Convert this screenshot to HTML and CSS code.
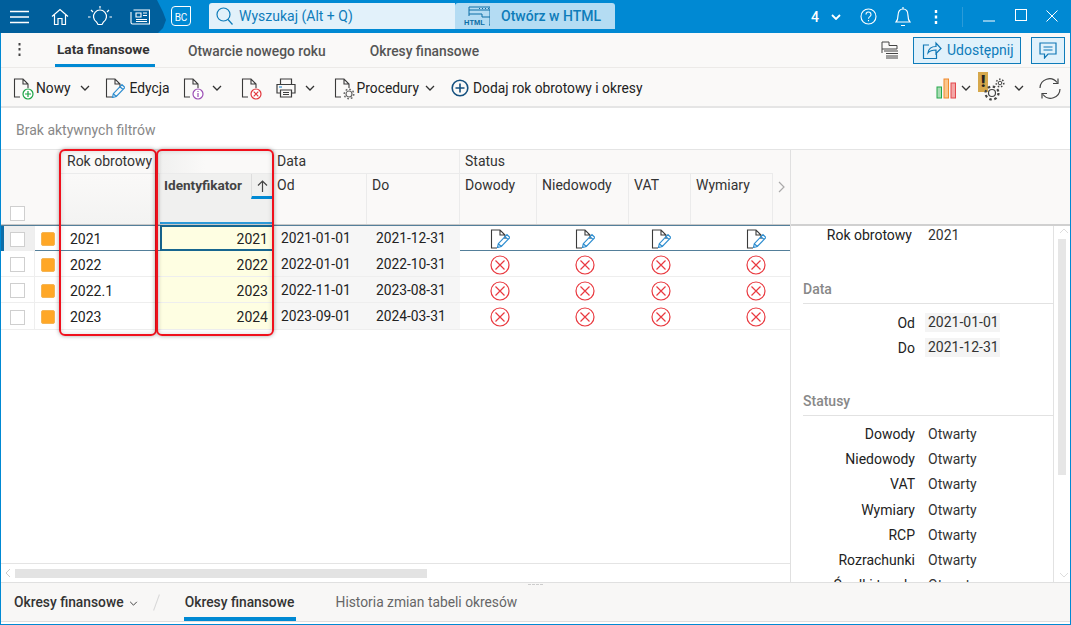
FILE: index.html
```html
<!DOCTYPE html>
<html lang="pl">
<head>
<meta charset="utf-8">
<title>Lata finansowe</title>
<link rel="stylesheet" href="styles.css">
</head>
<body>
<svg class="defs" width="0" height="0">
  <symbol id="doc" viewBox="0 0 20 20"><path d="M7 19H1.500V1H10l5 5v4M10 1v5h5" fill="none" stroke="#3a3a3a" stroke-width="1.100"/></symbol>
  <symbol id="pen" viewBox="0 0 20 20"><path d="M7.500 19.500l.8-3.800 8.700-9 3 2.800-8.700 9zM8.300 15.700l3 2.800M15 8.700l3 2.800" fill="none" stroke="#2f8ed0" stroke-width="1.200"/></symbol>
  <symbol id="xc" viewBox="0 0 20 20"><circle cx="10" cy="10" r="9" fill="none" stroke="#e9393f" stroke-width="1.200"/><path d="M5.500 5.500l9 9M14.500 5.500l-9 9" stroke="#e9393f" stroke-width="1.200"/></symbol>
  <symbol id="chev" viewBox="0 0 10 6"><path d="M1 1l4 4 4-4" fill="none" stroke="#333" stroke-width="1.300"/></symbol>
</svg>
<div class="app">
  <header class="titlebar">
    <div class="dark">
      <svg class="ic-menu" width="20" height="14" viewBox="0 0 20 14"><path d="M0 1.500h19M0 7h19M0 12.500h19" stroke="#fff" stroke-width="1.300"/></svg>
      <svg class="ic-home" width="18" height="18" viewBox="0 0 18 18"><path d="M1 8.500L9 1.500l8 7M3.500 7v9.500h3.500v-6h4v6h3.500V7" fill="none" stroke="#fff" stroke-width="1.200"/></svg>
      <svg class="ic-bulb" width="24" height="24" viewBox="0 0 24 24"><path d="M8.500 17a6.500 6.500 0 1 1 7 0l-1.500 2.500h-4zM12 1v2.500M3 5l2 2M21 5l-2 2M0 12h2.500M24 12h-2.500" fill="none" stroke="#fff" stroke-width="1.200"/></svg>
      <svg class="ic-news" width="20" height="16" viewBox="0 0 20 16"><path d="M3.500 1h16v14H2.500A1.500 1.500 0 0 1 1 13.500V3M6 4h5v4H6zM13 4h4M13 6.500h4M6 10.500h11M6 12.500h11" fill="none" stroke="#fff" stroke-width="1.100"/></svg>
    </div>
    <div class="bc">BC</div>
    <div class="search">
      <svg width="17" height="18" viewBox="0 0 17 18"><circle cx="7.500" cy="7.500" r="6.500" fill="none" stroke="#0e7cba" stroke-width="1.200"/><path d="M12 12.500l4.500 5" stroke="#0e7cba" stroke-width="1.200"/></svg>
      <span>Wyszukaj (Alt + Q)</span>
    </div>
    <div class="openhtml">
      <svg width="26" height="22" viewBox="0 0 26 22"><path d="M5 11V2h21v18h-1M5 5h21M5 9h13v3h8M15 3.500h1M18 3.500h1M21 3.500h1M24 3.500h1" fill="none" stroke="#0d6ea6" stroke-width="1"/><text x="0" y="20" class="htmltag">HTML</text></svg>
      <span>Otwórz w HTML</span>
    </div>
    <div class="winarea">
      <span class="num">4</span>
      <svg class="w-chev" width="10" height="6" viewBox="0 0 10 6"><path d="M1 1l4 4 4-4" fill="none" stroke="#fff" stroke-width="1.800"/></svg>
      <svg class="w-help" width="17" height="17" viewBox="0 0 17 17"><circle cx="8.500" cy="8.500" r="7.500" fill="none" stroke="#fff" stroke-width="1.100"/><path d="M6 6.500a2.500 2.500 0 1 1 3.800 2.100C8.900 9.200 8.500 9.700 8.500 10.800M8.500 12v1.300" fill="none" stroke="#fff" stroke-width="1.100"/></svg>
      <svg class="w-bell" width="16" height="21" viewBox="0 0 16 21"><path d="M1 16c1.500-1.500 2-3 2-6.500C3 5 5 3 8 3s5 2 5 6.500c0 3.500.5 5 2 6.500zM8 1v2M6 19.500h4" fill="none" stroke="#fff" stroke-width="1.200"/></svg>
      <svg class="w-dots" width="4" height="14" viewBox="0 0 4 14"><path d="M2 0v3M2 5.500v3M2 11v3" stroke="#fff" stroke-width="2.400"/></svg>
      <span class="w-sep"></span>
      <svg class="w-min" width="12" height="2" viewBox="0 0 12 2"><path d="M0 1h12" stroke="#fff"/></svg>
      <svg class="w-max" width="12" height="12" viewBox="0 0 12 12"><rect x=".5" y=".5" width="11" height="11" fill="none" stroke="#fff"/></svg>
      <svg class="w-close" width="12" height="12" viewBox="0 0 12 12"><path d="M.5.500l11 11M11.500.500l-11 11" stroke="#fff"/></svg>
    </div>
  </header>

  <nav class="tabs">
    <svg class="kebab" width="3" height="13" viewBox="0 0 3 13"><path d="M1.500 0v2.500M1.500 5v2.500M1.500 10.500V13" stroke="#444" stroke-width="2"/></svg>
    <a class="tab active t1">Lata finansowe</a>
    <a class="tab t2">Otwarcie nowego roku</a>
    <a class="tab t3">Okresy finansowe</a>
    <svg class="flags" width="18" height="18" viewBox="0 0 18 18"><path d="M1 1v11M1 1h7v3.500h8V8H1M3 10h14M5 12.500h12M5 15h12M5 17h12" fill="none" stroke="#444" stroke-width="1"/></svg>
    <button class="share">
      <svg width="20" height="20" viewBox="0 0 20 20"><path d="M7 5H1.500v13.500h13V13M6 13c.5-4 3.500-6.500 8-6.500V3l5 5.500-5 5V10c-3.500 0-6 .5-8 3z" fill="none" stroke="#0f77b5" stroke-width="1.200"/></svg>
      <span>Udostępnij</span>
    </button>
    <button class="comment">
      <svg width="18" height="17" viewBox="0 0 18 17"><path d="M1 1h16v11h-8l-3.500 4V12H1zM4.500 5h9M4.500 8h9" fill="none" stroke="#0f77b5" stroke-width="1.200"/></svg>
    </button>
  </nav>

  <div class="toolbar">
    <span class="tool t-new">
      <span class="icon"><svg width="20" height="20"><use href="#doc"/></svg><svg class="badge" width="12" height="12" viewBox="0 0 12 12"><circle cx="6" cy="6" r="5" fill="#fff" stroke="#1ba345" stroke-width="1.200"/><path d="M3 6h6M6 3v6" stroke="#1ba345" stroke-width="1.200"/></svg></span>
      <span>Nowy</span>
    </span>
    <svg class="cv c1" width="10" height="6"><use href="#chev"/></svg>
    <span class="tool t-edit">
      <span class="icon"><svg width="20" height="20"><use href="#doc"/></svg><svg class="over" width="20" height="20"><use href="#pen"/></svg></span>
      <span>Edycja</span>
    </span>
    <span class="icon t-info"><svg width="20" height="20"><use href="#doc"/></svg><svg class="badge" width="12" height="12" viewBox="0 0 12 12"><circle cx="6" cy="6" r="5" fill="#fff" stroke="#9c4fb5" stroke-width="1.200"/><path d="M6 5v4M6 3v1" stroke="#9c4fb5" stroke-width="1.200"/></svg></span>
    <svg class="cv c2" width="10" height="6"><use href="#chev"/></svg>
    <span class="icon t-del"><svg width="20" height="20"><use href="#doc"/></svg><svg class="badge" width="12" height="12" viewBox="0 0 12 12"><circle cx="6" cy="6" r="5" fill="#fff" stroke="#e2363c" stroke-width="1.200"/><path d="M3.700 3.700l4.600 4.600M8.300 3.700l-4.600 4.600" stroke="#e2363c" stroke-width="1.200"/></svg></span>
    <svg class="t-print" width="20" height="20" viewBox="0 0 20 20"><path d="M4.500 6V1h11v5M4.500 15H1V6.500h18V15h-3.500M4.500 12h11v7h-11zM7 14.500h6M7 16.500h6" fill="none" stroke="#3c3c3c" stroke-width="1.200"/><path d="M3 9h3" stroke="#2f8ed0" stroke-width="1.200"/></svg>
    <svg class="cv c3" width="10" height="6"><use href="#chev"/></svg>
    <span class="tool t-proc">
      <span class="icon"><svg width="20" height="20"><use href="#doc"/></svg><svg class="badge" width="12" height="12" viewBox="0 0 12 12"><circle cx="6" cy="6" r="3" fill="#f9f8f7" stroke="#666" stroke-width="1.200"/><circle cx="6" cy="6" r="4.800" fill="none" stroke="#666" stroke-width="1.400" stroke-dasharray="1.800 1.900"/></svg></span>
      <span>Procedury</span>
    </span>
    <svg class="cv c4" width="10" height="6"><use href="#chev"/></svg>
    <span class="tool t-add">
      <svg width="18" height="18" viewBox="0 0 18 18"><circle cx="9" cy="9" r="7.800" fill="none" stroke="#14507f" stroke-width="1.600"/><path d="M4.500 9h9M9 4.500v9" stroke="#14507f" stroke-width="1.600"/></svg>
      <span>Dodaj rok obrotowy i okresy</span>
    </span>
    <svg class="t-chart" width="21" height="21" viewBox="0 0 21 21"><rect x="1" y="9" width="4.500" height="11" fill="#a9dcb4" stroke="#24a84a"/><rect x="8" y="1" width="4.500" height="19" fill="#fbc68d" stroke="#f08a2c"/><rect x="15" y="5" width="4.500" height="15" fill="#f4a6a6" stroke="#e2484c"/></svg>
    <svg class="cv c5" width="10" height="6"><use href="#chev"/></svg>
    <span class="warn">
      <span class="warnbox">!</span>
      <svg class="gear" width="26" height="23" viewBox="0 0 26 23"><circle cx="10" cy="15" r="3.500" fill="none" stroke="#444" stroke-width="1.200"/><circle cx="10" cy="15" r="6.500" fill="none" stroke="#444" stroke-width="2.200" stroke-dasharray="2.500 2.600"/><circle cx="18" cy="5" r="1.800" fill="none" stroke="#444"/><circle cx="18" cy="5" r="3.800" fill="none" stroke="#444" stroke-width="1.500" stroke-dasharray="1.500 1.800"/></svg>
    </span>
    <svg class="cv c6" width="10" height="6"><use href="#chev"/></svg>
    <svg class="t-refresh" width="22" height="21" viewBox="0 0 22 21"><path d="M1 10A9.500 9.500 0 0 1 18 4.500M21 11A9.500 9.500 0 0 1 4 16.500M19 .500v5h-5M3 20.500v-5h5" fill="none" stroke="#444" stroke-width="1.200"/></svg>
  </div>

  <div class="filters">Brak aktywnych filtrów</div>

  <main class="content">
    <section class="gridwrap">
      <div class="thead">
        <div class="th sel"><span class="cb hcb"></span></div>
        <div class="th rok">Rok obrotowy</div>
        <div class="th rokb"></div>
        <div class="th idt"></div>
        <div class="th idb"><b>Identyfikator</b><span class="sort"><svg width="11" height="12" viewBox="0 0 11 12"><path d="M5.500 12V1M1 5.500l4.500-4.500 4.500 4.500" fill="none" stroke="#444" stroke-width="1.200"/></svg></span></div>
        <div class="th data">Data</div>
        <div class="th od">Od</div>
        <div class="th do">Do</div>
        <div class="th status">Status</div>
        <div class="th s1">Dowody</div>
        <div class="th s2">Niedowody</div>
        <div class="th s3">VAT</div>
        <div class="th s4">Wymiary</div>
        <div class="th more"><svg width="7" height="12" viewBox="0 0 7 12"><path d="M1 1l5 5-5 5" fill="none" stroke="#aaa" stroke-width="1.200"/></svg></div>
      </div>
      <div class="tbody">
        <div class="row current">
          <div class="c c0"><span class="marker"></span><span class="cb"></span></div><div class="c c1x"><span class="sq"></span></div>
          <div class="c yr">2021</div><div class="c id focus">2021</div><div class="c dt">2021-01-01</div><div class="c dt">2021-12-31</div>
          <div class="c ic"><svg width="20" height="20"><use href="#doc"/></svg><svg class="over2" width="20" height="20"><use href="#pen"/></svg></div>
          <div class="c ic"><svg width="20" height="20"><use href="#doc"/></svg><svg class="over2" width="20" height="20"><use href="#pen"/></svg></div>
          <div class="c ic"><svg width="20" height="20"><use href="#doc"/></svg><svg class="over2" width="20" height="20"><use href="#pen"/></svg></div>
          <div class="c ic last"><svg width="20" height="20"><use href="#doc"/></svg><svg class="over2" width="20" height="20"><use href="#pen"/></svg></div>
        </div>
        <div class="row">
          <div class="c c0"><span class="cb"></span></div><div class="c c1x"><span class="sq"></span></div>
          <div class="c yr">2022</div><div class="c id">2022</div><div class="c dt">2022-01-01</div><div class="c dt">2022-10-31</div>
          <div class="c ic"><svg width="20" height="20"><use href="#xc"/></svg></div><div class="c ic"><svg width="20" height="20"><use href="#xc"/></svg></div><div class="c ic"><svg width="20" height="20"><use href="#xc"/></svg></div><div class="c ic last"><svg width="20" height="20"><use href="#xc"/></svg></div>
        </div>
        <div class="row">
          <div class="c c0"><span class="cb"></span></div><div class="c c1x"><span class="sq"></span></div>
          <div class="c yr">2022.1</div><div class="c id">2023</div><div class="c dt">2022-11-01</div><div class="c dt">2023-08-31</div>
          <div class="c ic"><svg width="20" height="20"><use href="#xc"/></svg></div><div class="c ic"><svg width="20" height="20"><use href="#xc"/></svg></div><div class="c ic"><svg width="20" height="20"><use href="#xc"/></svg></div><div class="c ic last"><svg width="20" height="20"><use href="#xc"/></svg></div>
        </div>
        <div class="row tall">
          <div class="c c0"><span class="cb"></span></div><div class="c c1x"><span class="sq"></span></div>
          <div class="c yr">2023</div><div class="c id">2024</div><div class="c dt">2023-09-01</div><div class="c dt">2024-03-31</div>
          <div class="c ic"><svg width="20" height="20"><use href="#xc"/></svg></div><div class="c ic"><svg width="20" height="20"><use href="#xc"/></svg></div><div class="c ic"><svg width="20" height="20"><use href="#xc"/></svg></div><div class="c ic last"><svg width="20" height="20"><use href="#xc"/></svg></div>
        </div>
      </div>
      <div class="hscroll">
        <svg width="6" height="10" viewBox="0 0 6 10"><path d="M5 1L1 5l4 4" fill="none" stroke="#ccc"/></svg>
        <span class="hthumb"></span>
      </div>
      <span class="mark m1"></span>
      <span class="mark m2"></span>
    </section>
    <aside class="panel">
      <div class="phead"></div>
      <div class="pbody">
        <div class="pscroll">
          <dl class="kv first"><dt>Rok obrotowy</dt><dd>2021</dd></dl>
          <h3 class="sec sec-data">Data</h3>
          <dl class="kv"><dt>Od</dt><dd class="ro">2021-01-01</dd></dl>
          <dl class="kv"><dt>Do</dt><dd class="ro">2021-12-31</dd></dl>
          <h3 class="sec sec-stat">Statusy</h3>
          <dl class="kv"><dt>Dowody</dt><dd>Otwarty</dd></dl>
          <dl class="kv"><dt>Niedowody</dt><dd>Otwarty</dd></dl>
          <dl class="kv"><dt>VAT</dt><dd>Otwarty</dd></dl>
          <dl class="kv"><dt>Wymiary</dt><dd>Otwarty</dd></dl>
          <dl class="kv"><dt>RCP</dt><dd>Otwarty</dd></dl>
          <dl class="kv"><dt>Rozrachunki</dt><dd>Otwarty</dd></dl>
          <dl class="kv"><dt>Środki trwałe</dt><dd>Otwarty</dd></dl>
        </div>
        <div class="vscroll">
          <svg width="10" height="6" viewBox="0 0 10 6"><path d="M1 5l4-4 4 4" fill="none" stroke="#ddd"/></svg>
          <span class="vthumb"></span>
          <svg class="vdown" width="10" height="6" viewBox="0 0 10 6"><path d="M1 1l4 4 4-4" fill="none" stroke="#ddd"/></svg>
        </div>
      </div>
    </aside>
  </main>

  <footer class="bottom">
    <span class="crumb">Okresy finansowe</span>
    <svg class="crumb-chev" width="9" height="5" viewBox="0 0 10 6"><path d="M1 1l4 4 4-4" fill="none" stroke="#333" stroke-width="1.100"/></svg>
    <span class="slash"></span>
    <a class="btab on">Okresy finansowe</a>
    <a class="btab off">Historia zmian tabeli okresów</a>
    <span class="grip"></span>
  </footer>
</div>
</body>
</html>
```
FILE: styles.css
```css
* { box-sizing: border-box; }
html, body { margin: 0; height: 100%; overflow: hidden; }
body { font-family: Roboto, "Noto Sans", sans-serif; font-size: 14px; color: #222; background: #fff; }
.defs { position: absolute; }
svg { display: block; flex: none; }

.app { height: 625px; width: 1071px; display: flex; flex-direction: column; border: 1px solid #0089d3; border-top: 0; background: #fff; }

/* title bar */
.titlebar { height: 33px; margin-left: -1px; margin-right: -1px; display: flex; align-items: flex-start; background: #0089d3; flex: none; }
.dark { width: 166px; height: 33px; background: #005f9c; display: flex; align-items: center; clip-path: polygon(0 0, 157px 0, 163px 12px, 166px 20px, 163px 28px, 158px 33px, 0 33px); flex: none; }
.ic-menu { margin-left: 10px; }
.ic-home { margin-left: 21px; }
.ic-bulb { margin-left: 19px; }
.ic-news { margin-left: 18px; }
.bc { margin-left: 5px; margin-top: 6px; width: 20px; height: 20px; border: 1px solid #fff; border-radius: 4px 0 4px 4px; color: #fff; font-size: 10px; line-height: 21px; text-align: center; }
.search { margin-left: 18px; margin-top: 3px; width: 246px; height: 26px; background: #e2f1fa; display: flex; align-items: center; gap: 6px; padding-left: 7px; color: #0e7cba; border-radius: 3px 0 0 0; }
.openhtml { width: 160px; margin-top: 3px; height: 26px; background: #b4dcf3; border-radius: 3px 3px 0 0; display: flex; align-items: center; gap: 11px; padding-left: 9px; color: #0e7cba; font-size: 14px; font-weight: 500; }
.htmltag { font: 700 7.500px "Liberation Sans", sans-serif; fill: #0d6ea6; }
.winarea { flex: 1; display: flex; align-items: center; height: 33px; color: #fff; }
.num { margin-left: 196px; font-weight: 500; }
.w-chev { margin-left: 12px; }
.w-help { margin-left: 19px; }
.w-bell { margin-left: 18px; }
.w-dots { margin-left: 23px; }
.w-sep { width: 1px; height: 20px; margin-left: 24px; background: #2b9bd8; }
.w-min { margin-left: 20px; margin-top: 8px; }
.w-max { margin-left: 20px; margin-top: -3px; }
.w-close { margin-left: 19px; margin-top: -2px; }

/* tabs */
.tabs { height: 35px; background: #faf9f8; display: flex; align-items: center; border-bottom: 1px solid #eceae8; padding-right: 5px; flex: none; }
.kebab { margin-left: 17px; margin-top: -2px; }
.tab { height: 34px; display: flex; align-items: center; color: #555; font-weight: 500; font-size: 13.800px; padding-top: 1px; }
.t1 { margin-left: 34px; padding: 0 2px; width: 100px; color: #333; border-bottom: 3px solid #0089d3; font-weight: 700; font-size: 13.600px; white-space: nowrap; }
.t2 { margin-left: 33px; }
.t3 { margin-left: 44px; }
.flags { margin-left: auto; margin-top: -1px; }
.share { margin-left: 14px; width: 108px; height: 27px; background: #e0f1fb; border: 1px solid #0e7cba; display: flex; align-items: center; gap: 5px; padding: 0 0 0 8px; color: #0e7cba; font: 14px Roboto, sans-serif; }
.comment { margin-left: 10px; width: 34px; height: 27px; background: #e0f1fb; border: 1px solid #0e7cba; display: flex; align-items: center; justify-content: center; padding: 0; }

/* toolbar */
.toolbar { height: 40px; background: #faf9f8; display: flex; align-items: center; border-bottom: 2px solid #e5e5e5; padding: 2px 9px 0 0; font-size: 13.800px; flex: none; }
.icon { position: relative; display: block; width: 20px; height: 20px; flex: none; }
.badge { position: absolute; right: -1px; bottom: -2px; }
.over { position: absolute; left: 0; top: 0; }
.tool { display: flex; align-items: center; gap: 3px; }
.t-new { margin-left: 12px; }
.c1 { margin-left: 9px; }
.t-edit { margin-left: 15px; gap: 5px; }
.t-info { margin-left: 13px; }
.c2 { margin-left: 9px; }
.t-del { margin-left: 19px; }
.t-print { margin-left: 15px; }
.c3 { margin-left: 9px; }
.t-proc { margin-left: 19px; }
.c4 { margin-left: 6px; }
.t-add { margin-left: 16px; gap: 4px; }
.t-chart { margin-left: auto; }
.c5 { margin-left: 4px; }
.warn { position: relative; width: 26px; height: 26px; margin-left: 7px; margin-top: -4px; display: block; flex: none; }
.warnbox { position: absolute; left: 0; top: -1px; width: 10px; height: 20px; background: #d6a84c; color: #222; font-weight: 900; font-size: 17px; line-height: 19px; text-align: center; }
.gear { position: absolute; left: 4px; top: 5px; }
.c6 { margin-left: 10px; }
.t-refresh { margin-left: 15px; }
.cv { flex: none; }

/* filter line */
.filters { height: 42px; line-height: 44px; padding-left: 15px; color: #888; font-size: 14px; background: #fff; border-bottom: 1px solid #e4e4e4; flex: none; }

/* main */
.content { flex: 1; min-height: 0; display: flex; border-bottom: 1px solid #e0e0e0; }
.gridwrap { position: relative; flex: none; display: flex; flex-direction: column; border-right: 1px solid #e0e0e0; width: 790px; }
.thead { display: grid; grid-template-columns: 59px 100px 114px 93px 93px 77px 92px 62px 82px 17px; grid-template-rows: 24px 50px; background: #faf9f8; border-bottom: 2px solid #c8c8c8; height: 76px; flex: none; color: #333; }
.th { padding: 3px 0 0 6px; border-right: 1px solid #ebebeb; border-bottom: 1px solid #ebebeb; line-height: 16px; }
.sel { grid-row: 1 / 3; grid-column: 1; border: 0; display: flex; align-items: flex-end; padding: 0 0 3px 9px; }
.hcb { background: #fff; }
.rok { grid-row: 1; grid-column: 2; border-right: 0; padding-left: 7px; }
.rokb { grid-row: 2; grid-column: 2; border-bottom: 0; background: linear-gradient(#faf9f8, #f3f3f2); }
.idt { grid-row: 1; grid-column: 3; background: linear-gradient(90deg, #f0f0ef, #faf9f8 40%); }
.idb { grid-row: 2; grid-column: 3; background: #f0f0ef; border-bottom: 2px solid #2d9ad8; display: flex; align-items: flex-start; padding: 3px 0 0 4px; font-size: 13.600px; }
.idb b { font-weight: 700; color: #444; width: 87px; white-space: nowrap; }
.sort { width: 21px; height: 25px; border-left: 1px solid #ddd; border-bottom: 3px solid #0089d3; margin-top: -3px; padding: 6px 0 0 5px; display: block; }
.data { grid-row: 1; grid-column: 4 / 6; padding-left: 3px; }
.od { grid-row: 2; grid-column: 4; border-bottom: 0; padding-left: 3px; }
.do { grid-row: 2; grid-column: 5; border-bottom: 0; padding-left: 5px; }
.status { grid-row: 1; grid-column: 6 / 10; padding-left: 5px; border-right: 0; }
.s1 { grid-row: 2; grid-column: 6; border-bottom: 0; padding-left: 5px; }
.s2 { grid-row: 2; grid-column: 7; border-bottom: 0; padding-left: 5px; }
.s3 { grid-row: 2; grid-column: 8; border-bottom: 0; padding-left: 5px; }
.s4 { grid-row: 2; grid-column: 9; border-bottom: 0; padding-left: 5px; }
.more { grid-row: 2; grid-column: 10; border: 0; padding: 7px 0 0 5px; }

.tbody { flex: 1; min-height: 0; }
.row { display: grid; grid-template-columns: 34px 25px 100px 114px 93px 93px 80px 90px 62px 98px; height: 26px; border-bottom: 1px solid #eee; }
.row.tall { height: 27px; }
.row.current { margin-top: -1px; border-top: 1px solid #547f9a; border-bottom: 1px solid #547f9a; }
.c { display: flex; align-items: center; line-height: 1; position: relative; padding-top: 2px; }
.current .c { padding-top: 1px; }
.c0 { justify-content: center; border-right: 1px solid #eee; }
.current .c0 { background: #efefef; }
.marker { position: absolute; left: 0; top: 0; bottom: 0; width: 3px; background: #0e6ea8; }
.cb { display: block; width: 15px; height: 15px; border: 1px solid #cfcfcf; background: #fff; }
.c1x { justify-content: center; padding-left: 1px; }
.sq { display: block; width: 14px; height: 14px; background: #ffa726; border: 1px solid #f5b555; border-radius: 2px; }
.yr { padding-left: 10px; }
.id { background: #fefee2; justify-content: flex-end; padding-right: 6px; }
.focus { border: 2px solid #17668f; margin-top: -1px; height: 26px; padding-right: 4px; }
.dt { background: #f6f6f6; padding-left: 7px; font-size: 13.800px; }
.dt + .dt { padding-left: 9px; }
.ic { justify-content: center; }
.last { justify-content: flex-end; padding-right: 24px; }
.over2 { position: absolute; left: 50%; margin-left: -10px; top: 2px; }
.last .over2 { left: auto; margin-left: 0; right: 24px; }

.hscroll { height: 19px; border-top: 1px solid #e4e4e4; display: flex; align-items: center; padding-left: 4px; gap: 4px; flex: none; }
.hthumb { display: block; width: 412px; height: 9px; background: #e3e3e3; }

.mark { position: absolute; top: -1px; height: 187px; border: 2px solid #f0101c; border-radius: 6px; box-shadow: 0 0 4px rgba(0,0,0,.35), inset 0 0 5px rgba(0,0,0,.15); pointer-events: none; }
.m1 { left: 58px; width: 98px; }
.m2 { left: 155px; width: 118px; }

/* right panel */
.panel { flex: 1; min-width: 0; display: flex; flex-direction: column; }
.phead { height: 76px; background: #faf9f8; border-bottom: 2px solid #d0d0d0; flex: none; }
.pbody { flex: 1; min-height: 0; display: flex; overflow: hidden; }
.pscroll { width: 262px; flex: none; overflow: hidden; height: 356px; }
.kv { margin: 0; display: flex; height: 25.200px; align-items: center; }
.kv.first { height: 17px; }
.kv dt { width: 124px; text-align: right; color: #222; flex: none; }
.kv.first dt { width: 121px; }
.kv.first dd { margin-left: 13px; }
.kv dd { color: #333; padding: 0 3px; margin: 0 0 0 10px; white-space: nowrap; }
.kv dd.ro { background: #f4f4f4; height: 19px; line-height: 19px; width: 75px; }
.sec { margin: 0 0 8px 12px; font-size: 14px; font-weight: 500; color: #888; border-bottom: 1px solid #e2e2e2; line-height: 22px; }
.sec-data { margin-top: 35px; height: 26px; margin-bottom: 6px; }
.sec-stat { margin-top: 30px; height: 26px; margin-bottom: 5px; }
.vscroll { flex: 1; border-left: 1px solid #e2e2e2; padding: 2px 0 0 5px; position: relative; }
.vthumb { display: block; width: 8px; height: 236px; background: #e6e6e6; margin: 5px 0 0 -1px; }
.vdown { position: absolute; left: 5px; top: 346px; }

/* bottom bar */
.bottom { height: 39px; background: #f8f7f6; border-bottom: 1px solid #dedede; margin-bottom: 2px; display: flex; align-items: center; position: relative; font-size: 13.800px; flex: none; }
.crumb { margin-left: 13px; font-weight: 500; color: #333; }
.crumb-chev { margin-left: 5px; margin-top: 2px; }
.slash { width: 1px; height: 17px; margin-left: 18px; background: #d8d8d8; transform: rotate(20deg); }
.btab { height: 38px; display: flex; align-items: center; }
.on { margin-left: 27px; width: 112px; justify-content: center; font-weight: 500; color: #333; border-bottom: 4px solid #0089d3; padding-top: 3px; white-space: nowrap; }
.off { margin-left: 40px; color: #666; }
.grip { position: absolute; left: 527px; top: 1px; width: 15px; border-top: 1px dashed #ccc; }
```
